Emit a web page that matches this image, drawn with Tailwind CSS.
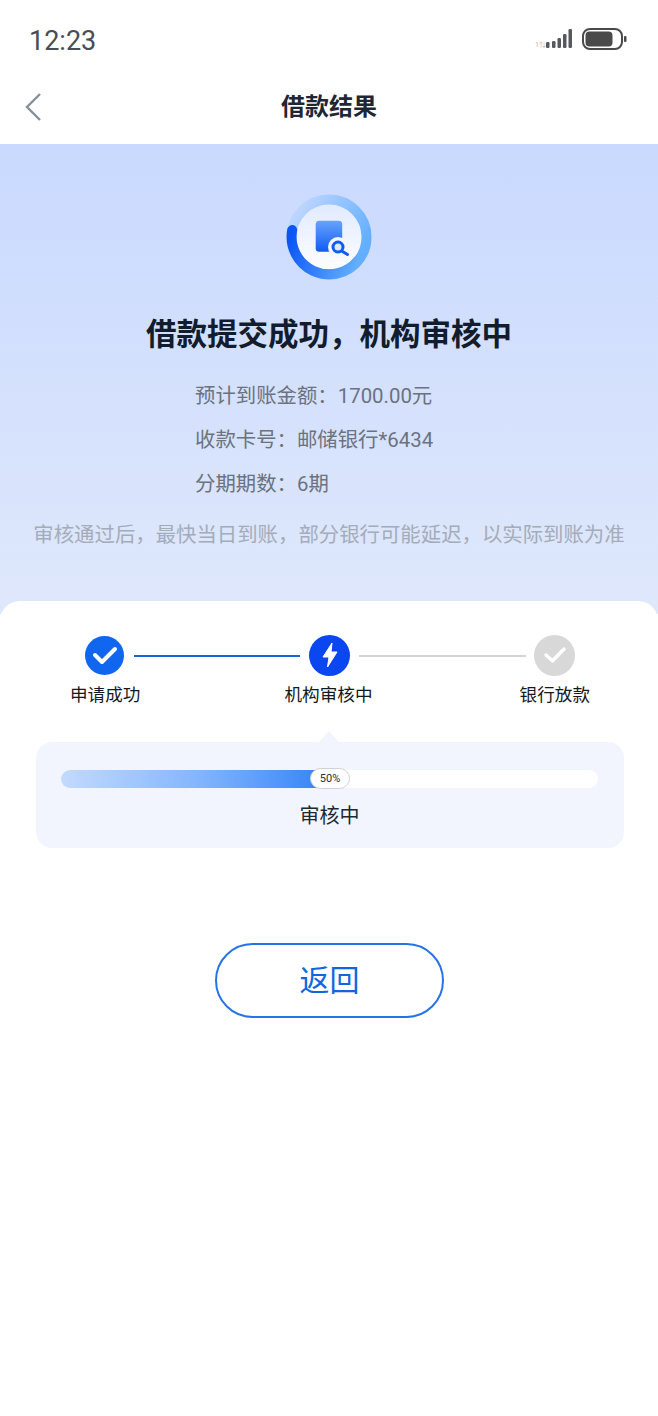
<!DOCTYPE html>
<html lang="zh-CN">
<head>
  <meta charset="UTF-8" />
  <meta name="viewport" content="width=device-width, initial-scale=1.0" />
  <title>借款结果</title>
  <script src="https://cdn.jsdelivr.net/npm/@tailwindcss/browser@4"></script>
</head>
<body class="bg-white font-['Roboto','Noto_Sans_CJK_SC',sans-serif]">
  <div class="w-[658px] h-[1416px] bg-white overflow-hidden">

    <!-- status bar -->
    <div class="h-[72px] flex items-center justify-between pl-[29px] pr-[30px] pt-[5px]">
      <span class="mt-[5px] text-[27px] leading-none text-[#4a4d52]">12:23</span>
      <svg width="95" height="26" viewBox="0 0 95 26">
        <text x="2" y="21" font-size="7" fill="#b5b8bc">1⇅</text>
        <rect x="13" y="16" width="3.5" height="6" rx="1.2" fill="#55585c"/>
        <rect x="19" y="15" width="3.5" height="7" rx="1.2" fill="#55585c"/>
        <rect x="24.5" y="12" width="3.5" height="10" rx="1.2" fill="#55585c"/>
        <rect x="30" y="8" width="3.5" height="14" rx="1.2" fill="#55585c"/>
        <rect x="35.5" y="3" width="3.5" height="19" rx="1.2" fill="#55585c"/>
        <rect x="50" y="3" width="39" height="20" rx="7" fill="none" stroke="#4a4a4a" stroke-width="2"/>
        <rect x="52.5" y="5.5" width="27" height="15" rx="4" fill="#4a4a4a"/>
        <rect x="91" y="10" width="2.5" height="6" rx="1" fill="#4a4a4a"/>
      </svg>
    </div>

    <!-- title bar -->
    <div class="relative h-[72px] flex items-center justify-center">
      <svg class="absolute left-[24px] top-[20px]" width="20" height="30" viewBox="0 0 20 30">
        <path d="M16 2 L3 15 L16 28" fill="none" stroke="#8a9099" stroke-width="2.4"/>
      </svg>
      <h1 class="text-[24px] font-bold text-[#1f2733] pb-[3px]">借款结果</h1>
    </div>

    <!-- result header -->
    <div class="h-[470px] bg-gradient-to-b from-[#c9d9ff] to-[#dfe8fb] flex flex-col items-center pt-[50px]">
      <svg width="86" height="86" viewBox="0 0 86 86">
        <defs>
          <linearGradient id="ring" x1="0" y1="0" x2="1" y2="0.6">
            <stop offset="0" stop-color="#c9dbff"/>
            <stop offset="1" stop-color="#62aeff"/>
          </linearGradient>
          <linearGradient id="arc" gradientUnits="userSpaceOnUse" x1="6" y1="40" x2="72" y2="67">
            <stop offset="0" stop-color="#0b55f5"/>
            <stop offset="1" stop-color="#62aeff"/>
          </linearGradient>
          <linearGradient id="inner" x1="0" y1="0" x2="0" y2="1">
            <stop offset="0" stop-color="#dfe9ff"/>
            <stop offset="1" stop-color="#ffffff"/>
          </linearGradient>
          <linearGradient id="doc" x1="0" y1="0" x2="0" y2="1">
            <stop offset="0" stop-color="#69a3fb"/>
            <stop offset="1" stop-color="#0f5cf5"/>
          </linearGradient>
        </defs>
        <circle cx="43" cy="43" r="37.5" fill="url(#inner)" stroke="url(#ring)" stroke-width="10"/>
        <path d="M6.2 36 A37.5 37.5 0 0 0 71.7 67" fill="none" stroke="url(#arc)" stroke-width="10" stroke-linecap="round"/>
        <rect x="29.7" y="26.7" width="26.5" height="31" rx="3.5" fill="url(#doc)"/>
        <circle cx="52" cy="53" r="10" fill="#f4f7ff"/>
        <circle cx="52" cy="53" r="5" fill="#dce8ff" stroke="#0f5cf5" stroke-width="3"/>
        <path d="M56.5 57.5 L61.5 60.5" stroke="#0f5cf5" stroke-width="3" stroke-linecap="round"/>
      </svg>
      <h2 class="mt-[33px] text-[30.5px] leading-[44px] font-semibold text-[#111c2c]">借款提交成功，机构审核中</h2>
      <div class="mt-[24px] w-full pl-[195px] flex flex-col gap-[14px] text-[20.4px] leading-[30px] text-[#6b7280]">
        <p>预计到账金额：1700.00元</p>
        <p>收款卡号：邮储银行*6434</p>
        <p>分期期数：6期</p>
      </div>
      <p class="mt-[21px] text-[20.4px] leading-[30px] text-[#a4acb9] whitespace-nowrap">审核通过后，最快当日到账，部分银行可能延迟，以实际到账为准</p>
    </div>

    <!-- progress card -->
    <div class="relative -mt-[13px] bg-white rounded-t-[20px] pl-[36px] pr-[34px] pt-[33px]">
      <div class="relative h-[72px]">
        <div class="flex items-center pl-[49px] pr-[48px] h-[42px]">
          <span class="w-[39px] h-[39px] rounded-full bg-[#1166f0] flex items-center justify-center shrink-0">
            <svg width="26" height="20" viewBox="0 0 26 20"><path d="M3 10 L10 17 L23 4" fill="none" stroke="#fff" stroke-width="4" stroke-linecap="round" stroke-linejoin="round"/></svg>
          </span>
          <span class="ml-[10px] mt-[2px] w-[166px] h-[2px] bg-[#1a62d8] shrink-0"></span>
          <span class="ml-[9px] w-[41px] h-[41px] rounded-full bg-[#0a47f0] flex items-center justify-center shrink-0">
            <svg width="18" height="26" viewBox="0 0 18 26"><path d="M11 1 L2 15 H8 L6.5 25 L16 10 H10 Z" fill="#fff" stroke="#fff" stroke-width="1" stroke-linejoin="round"/></svg>
          </span>
          <span class="ml-[9px] mt-[2px] w-[167px] h-[2px] bg-[#d4d4d6] shrink-0"></span>
          <span class="ml-[8px] w-[41px] h-[41px] rounded-full bg-[#d8d8d8] flex items-center justify-center shrink-0">
            <svg width="24" height="18" viewBox="0 0 24 18"><path d="M3 9 L9.5 15 L21 3" fill="none" stroke="#fff" stroke-width="3.5" stroke-linecap="round" stroke-linejoin="round"/></svg>
          </span>
        </div>
        <div class="flex justify-between pl-[34px] pr-[34px] mt-[6px] text-[17.6px] leading-[26px] text-[#15181d]">
          <span>申请成功</span>
          <span class="mr-[3px]">机构审核中</span>
          <span>银行放款</span>
        </div>
      </div>

      <!-- status box -->
      <div class="relative mt-[36px] h-[106px] bg-[#f2f5fe] rounded-[16px] pl-[25px] pr-[26px] pt-[28px]">
        <span class="absolute left-[283px] -top-[11px] w-0 h-0 border-x-[10px] border-x-transparent border-b-[11px] border-b-[#f2f5fe]"></span>
        <div class="relative h-[18px] bg-white rounded-full">
          <div class="h-full w-[270px] rounded-full bg-gradient-to-r from-[#c3dafd] via-[#84b6fd] to-[#2d80f6]"></div>
          <span class="absolute left-[249px] -top-[2px] w-[40px] h-[21px] bg-white border border-[#cfd2d6] rounded-full flex items-center justify-center text-[11px] leading-none text-[#2a2d33]">50%</span>
        </div>
        <p class="mt-[13px] text-center text-[20px] leading-[30px] text-[#1f2733]">审核中</p>
      </div>

      <!-- back button -->
      <div class="flex justify-center mt-[95px] pr-[1px]">
        <button class="w-[229px] h-[75px] rounded-full border-2 border-[#2673e8] text-[30px] text-[#1166e0]">返回</button>
      </div>
    </div>
  </div>
</body>
</html>
